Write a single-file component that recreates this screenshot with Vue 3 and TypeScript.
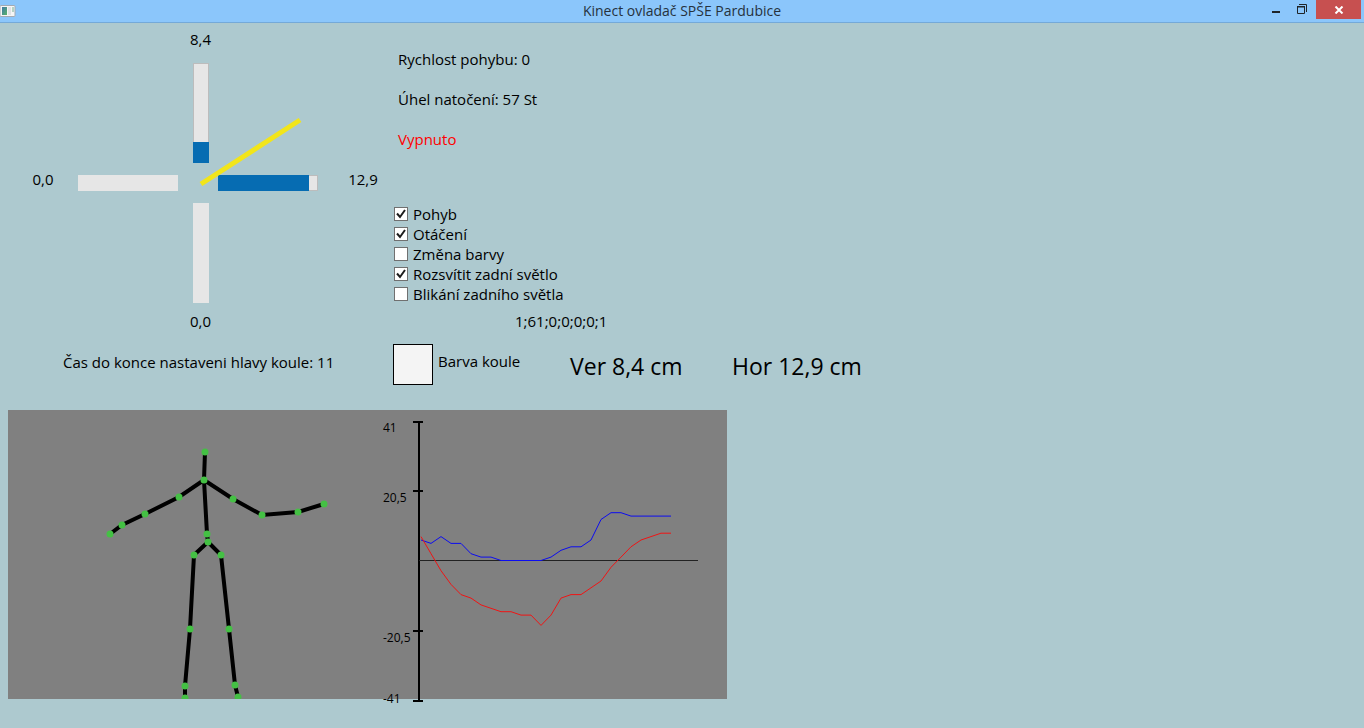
<script setup lang="ts">
import { ref } from 'vue'

interface Point { x: number; y: number }
interface Option { id: string; label: string; checked: boolean }

const up = 21
const right = 91

const options = ref<Option[]>([
  { id: 'move', label: 'Pohyb', checked: true },
  { id: 'rotate', label: 'Otáčení', checked: true },
  { id: 'colour', label: 'Změna barvy', checked: false },
  { id: 'back-light', label: 'Rozsvítit zadní světlo', checked: true },
  { id: 'blink', label: 'Blikání zadního světla', checked: false },
])

const joints: Record<string, Point> = {
  head: { x: 197, y: 42 },
  neck: { x: 196, y: 70 },
  shoulderL: { x: 171, y: 87 },
  elbowL: { x: 137, y: 104 },
  wristL: { x: 114, y: 115 },
  handL: { x: 102, y: 124 },
  shoulderR: { x: 225, y: 89 },
  elbowR: { x: 254, y: 105 },
  wristR: { x: 290, y: 102 },
  handR: { x: 316, y: 94 },
  spine: { x: 199, y: 124 },
  hip: { x: 200, y: 132 },
  hipL: { x: 186, y: 145 },
  hipR: { x: 213, y: 145 },
  kneeL: { x: 182, y: 219 },
  kneeR: { x: 221, y: 219 },
  ankleL: { x: 177, y: 276 },
  ankleR: { x: 227, y: 275 },
  footL: { x: 177, y: 288 },
  footR: { x: 230, y: 287 },
}

const chains: string[][] = [
  ['head', 'neck', 'spine', 'hip'],
  ['neck', 'shoulderL', 'elbowL', 'wristL', 'handL'],
  ['neck', 'shoulderR', 'elbowR', 'wristR', 'handR'],
  ['hip', 'hipL', 'kneeL', 'ankleL', 'footL'],
  ['hip', 'hipR', 'kneeR', 'ankleR', 'footR'],
]
const bones = chains.map((c) => c.map((n) => `${joints[n].x},${joints[n].y}`).join(' '))

const horizontal = [6, 5, 7, 5, 5, 2, 1, 1, 0, 0, 0, 0, 0, 1, 3, 4, 4, 6, 12, 14, 14, 13, 13, 13, 13, 13]
const vertical = [7, 2, -3, -7, -10, -11, -13, -14, -15, -15, -16, -16, -19, -16, -11, -10, -10, -8, -6, -2, 1, 4, 6, 7, 8, 8]

const plot = (values: number[]): string =>
  values.map((v, i) => `${413 + i * 10},${(150.5 - (v * 140) / 41).toFixed(1)}`).join(' ')

const ticks = [
  { y: 12, textY: 22, text: '41' },
  { y: 81, textY: 92, text: '20,5' },
  { y: 221, textY: 232, text: '-20,5' },
  { y: 291, textY: 293, text: '-41' },
]
</script>

<template>
  <div class="window">
    <header class="titlebar">
      <svg class="app-icon" width="16" height="12" viewBox="0 0 16 12" aria-hidden="true">
        <defs>
          <linearGradient id="pane" x1="0" y1="0" x2="1" y2="1">
            <stop offset="0" stop-color="#3f79a8" />
            <stop offset="1" stop-color="#58b368" />
          </linearGradient>
        </defs>
        <rect x="0" y="0.5" width="15" height="11" rx="1" fill="#f5f5f5" stroke="#a3aab3" />
        <rect x="2" y="2" width="5" height="8" fill="url(#pane)" />
        <rect x="8" y="2" width="3" height="8" fill="#dfe2e4" />
        <rect x="12" y="2" width="2" height="5" fill="#b5d3c4" />
      </svg>
      <h1>Kinect ovladač SPŠE Pardubice</h1>
      <div class="window-buttons">
        <button type="button" aria-label="Minimalizovat">
          <svg width="26" height="19" viewBox="0 0 26 19"><path d="M11 11h8v2h-8z" fill="#1f2428" /></svg>
        </button>
        <button type="button" aria-label="Obnovit">
          <svg width="26" height="19" viewBox="0 0 26 19" fill="none" stroke="#1f2428">
            <path d="M10.500 7v6.500h7V7M10 7h8" />
            <path d="M10 6.500h8M12 4.500h7.500V12" />
          </svg>
        </button>
        <button type="button" class="close" aria-label="Zavřít">
          <svg width="10" height="8" viewBox="0 0 10 8"><path d="M1.500 0.500L8.500 7.500M8.500 0.500L1.500 7.500" stroke="#fff" stroke-width="2" /></svg>
        </button>
      </div>
    </header>

    <main>
      <div class="top">
        <section class="gauge">
          <span class="value north">8,4</span>
          <span class="value west">0,0</span>
          <span class="value east">12,9</span>
          <span class="value south">0,0</span>
          <div class="bar tall framed bar-n" role="meter" aria-label="Nahoru" :aria-valuenow="up">
            <div class="fill" :style="{ height: up + '%' }"></div>
          </div>
          <div class="bar wide bar-w" role="meter" aria-label="Vlevo" aria-valuenow="0"></div>
          <div class="bar wide framed bar-e" role="meter" aria-label="Vpravo" :aria-valuenow="right">
            <div class="fill" :style="{ width: right + '%' }"></div>
          </div>
          <div class="bar tall bar-s" role="meter" aria-label="Dolů" aria-valuenow="0"></div>
          <svg class="needle" width="140" height="140" viewBox="0 0 140 140" aria-hidden="true">
            <path d="M23 121L122 57" stroke="#f2e51a" stroke-width="5" />
          </svg>
        </section>

        <section class="controls">
          <div class="status">
            <p>Rychlost pohybu: 0</p>
            <p>Úhel natočení: 57 St</p>
            <p class="off">Vypnuto</p>
          </div>
          <div class="options">
            <label v-for="o in options" :key="o.id" :for="o.id">
              <span class="box">
                <input :id="o.id" v-model="o.checked" type="checkbox" />
                <svg v-if="o.checked" width="14" height="14" viewBox="0 0 14 14" aria-hidden="true">
                  <path d="M3 6.500L6 10L11 3" fill="none" stroke="#1c1c1c" stroke-width="2" />
                </svg>
              </span>
              {{ o.label }}
            </label>
          </div>
          <p class="packet">1;61;0;0;0;0;1</p>
        </section>
      </div>

      <div class="summary">
        <p class="countdown">Čas do konce nastaveni hlavy koule: 11</p>
        <div class="ball">
          <button type="button" class="swatch" aria-labelledby="ball-label"></button>
          <span id="ball-label">Barva koule</span>
        </div>
        <p class="reading">Ver 8,4 cm</p>
        <p class="reading">Hor 12,9 cm</p>
      </div>

      <svg class="view" width="719" height="289" viewBox="0 0 719 289">
        <rect width="719" height="289" fill="#808080" />
        <svg width="719" height="289">
          <polyline v-for="(b, i) in bones" :key="i" :points="b" fill="none" stroke="#000" stroke-width="4" />
          <circle v-for="(p, name) in joints" :key="name" :cx="p.x" :cy="p.y" r="3.500" fill="#44c044" />
        </svg>
        <path d="M411 11V292" stroke="#000" stroke-width="2" />
        <g v-for="t in ticks" :key="t.y">
          <path :d="`M405 ${t.y}h10`" stroke="#000" stroke-width="2" />
          <text x="375" :y="t.textY">{{ t.text }}</text>
        </g>
        <path d="M411 150.500H690" stroke="#222" />
        <polyline :points="plot(horizontal)" fill="none" stroke="#0c0cf0" />
        <polyline :points="plot(vertical)" fill="none" stroke="#f01414" />
      </svg>
    </main>
  </div>
</template>

<style>
body {
  background: #adc9cf;
}
</style>

<style scoped>
.window {
  min-height: 100vh;
  background: #adc9cf;
  color: #000;
  font: 15px/20px "Segoe UI", "Open Sans", "Noto Sans", sans-serif;
}
h1,
p {
  margin: 0;
  font: inherit;
}
.titlebar {
  display: grid;
  grid-template-columns: 1fr auto 1fr;
  height: 22px;
  background: #8bc6fb;
  border-bottom: 1px solid #74a9d8;
}
.app-icon {
  margin-top: 5px;
}
h1 {
  color: #26323d;
  font-size: 14px;
  line-height: 22px;
}
.window-buttons {
  display: flex;
  justify-content: flex-end;
  padding-right: 3px;
}
button {
  padding: 0;
  border: 0;
  background: none;
}
.window-buttons button {
  display: flex;
  align-items: center;
  justify-content: center;
  width: 26px;
  height: 19px;
}
.window-buttons .close {
  width: 45px;
  margin-left: 3px;
  background: #c75050;
}
main {
  padding: 0 8px;
}
.top {
  display: grid;
  grid-template-columns: 385px 1fr;
}
.gauge {
  display: grid;
  grid-template-columns: 70px 100px 40px 100px 75px;
  grid-template-rows: 40px 100px 40px 100px 35px;
}
.value {
  align-self: center;
  text-align: center;
}
.north {
  grid-area: 1 / 3;
  padding: 0 0 8px 5px;
}
.west {
  grid-area: 3 / 1;
  padding-bottom: 8px;
}
.east {
  grid-area: 3 / 5;
  padding: 0 0 8px 15px;
}
.south {
  grid-area: 5 / 3;
  padding-left: 5px;
}
.bar {
  display: flex;
  box-sizing: border-box;
  background: #e6e6e6;
}
.tall {
  align-items: flex-end;
  width: 16px;
  margin-left: 15px;
}
.wide {
  align-self: center;
  height: 16px;
}
.framed {
  outline: 1px solid #bcbcbc;
  outline-offset: -1px;
}
.fill {
  position: relative;
  width: 100%;
  height: 100%;
  background: #066cb2;
}
.bar-n { grid-area: 2 / 3; }
.bar-w { grid-area: 3 / 2; }
.bar-e { grid-area: 3 / 4; }
.bar-s { grid-area: 4 / 3; }
.needle {
  grid-area: 2 / 3 / 4 / 5;
  z-index: 1;
}
.status {
  padding: 16px 0 0 5px;
  line-height: 40px;
}
.off {
  color: #f00;
}
.options {
  display: flex;
  flex-direction: column;
  align-items: flex-start;
  padding: 45px 0 0 1px;
}
label {
  display: flex;
  align-items: center;
  gap: 5px;
}
.box {
  display: grid;
}
.box > * {
  grid-area: 1 / 1;
}
.box svg {
  pointer-events: none;
}
input {
  appearance: none;
  box-sizing: border-box;
  width: 14px;
  height: 14px;
  margin: 0;
  border: 1px solid #707070;
  background: #fff;
}
.packet {
  padding: 7px 0 0 122px;
}
.summary {
  display: grid;
  grid-template-columns: 385px 177px 162px 1fr;
  padding: 6px 0 22px;
}
.countdown {
  padding: 8px 0 0 55px;
}
.ball {
  display: flex;
  gap: 5px;
  line-height: 34px;
}
.swatch {
  width: 40px;
  height: 41px;
  border: 1px solid #000;
  background: #f4f4f4;
}
.reading {
  font-size: 23px;
  line-height: 44px;
}
.view {
  display: block;
  overflow: visible;
}
.view text {
  font-size: 12px;
}
</style>
